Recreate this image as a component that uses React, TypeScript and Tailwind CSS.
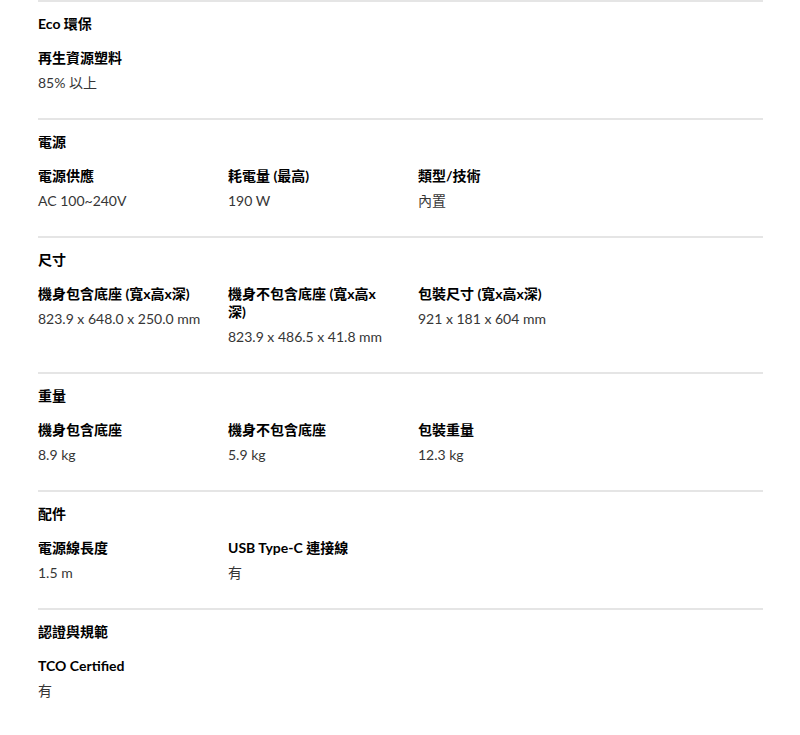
import React from "react";

type Spec = { label: string; value: string };
type Section = { title: string; items: Spec[] };

const sections: Section[] = [
  { title: "Eco 環保", items: [{ label: "再生資源塑料", value: "85% 以上" }] },
  {
    title: "電源",
    items: [
      { label: "電源供應", value: "AC 100~240V" },
      { label: "耗電量 (最高)", value: "190 W" },
      { label: "類型/技術", value: "內置" },
    ],
  },
  {
    title: "尺寸",
    items: [
      { label: "機身包含底座 (寬x高x深)", value: "823.9 x 648.0 x 250.0 mm" },
      { label: "機身不包含底座 (寬x高x深)", value: "823.9 x 486.5 x 41.8 mm" },
      { label: "包裝尺寸 (寬x高x深)", value: "921 x 181 x 604 mm" },
    ],
  },
  {
    title: "重量",
    items: [
      { label: "機身包含底座", value: "8.9 kg" },
      { label: "機身不包含底座", value: "5.9 kg" },
      { label: "包裝重量", value: "12.3 kg" },
    ],
  },
  {
    title: "配件",
    items: [
      { label: "電源線長度", value: "1.5 m" },
      { label: "USB Type-C 連接線", value: "有" },
    ],
  },
  { title: "認證與規範", items: [{ label: "TCO Certified", value: "有" }] },
];

const SpecSection = ({ section }: { section: Section }) => {
  return (
    <div className="border-t-2 border-[#e5e5e5] pt-[12px] pb-[25px]">
      <h3 className="text-[14px] leading-[20px] font-bold text-black">{section.title}</h3>
      <div className="flex mt-[15px]">
        {section.items.map((item) => (
          <div key={item.label} className="w-[190px] pr-[30px]">
            <div className="text-[14px] leading-[18px] font-bold text-black">{item.label}</div>
            <div className="mt-[6px] text-[14px] leading-[20px] text-[#363636] whitespace-nowrap">
              {item.value}
            </div>
          </div>
        ))}
      </div>
    </div>
  );
};

export default function App() {
  return (
    <div
      className="bg-white w-[800px] h-[735px] overflow-hidden"
      style={{ fontFamily: 'Lato, "Noto Sans CJK TC", sans-serif' }}
    >
      <div className="ml-[38px] w-[725px]">
        {sections.map((s) => (
          <SpecSection key={s.title} section={s} />
        ))}
      </div>
    </div>
  );
}
